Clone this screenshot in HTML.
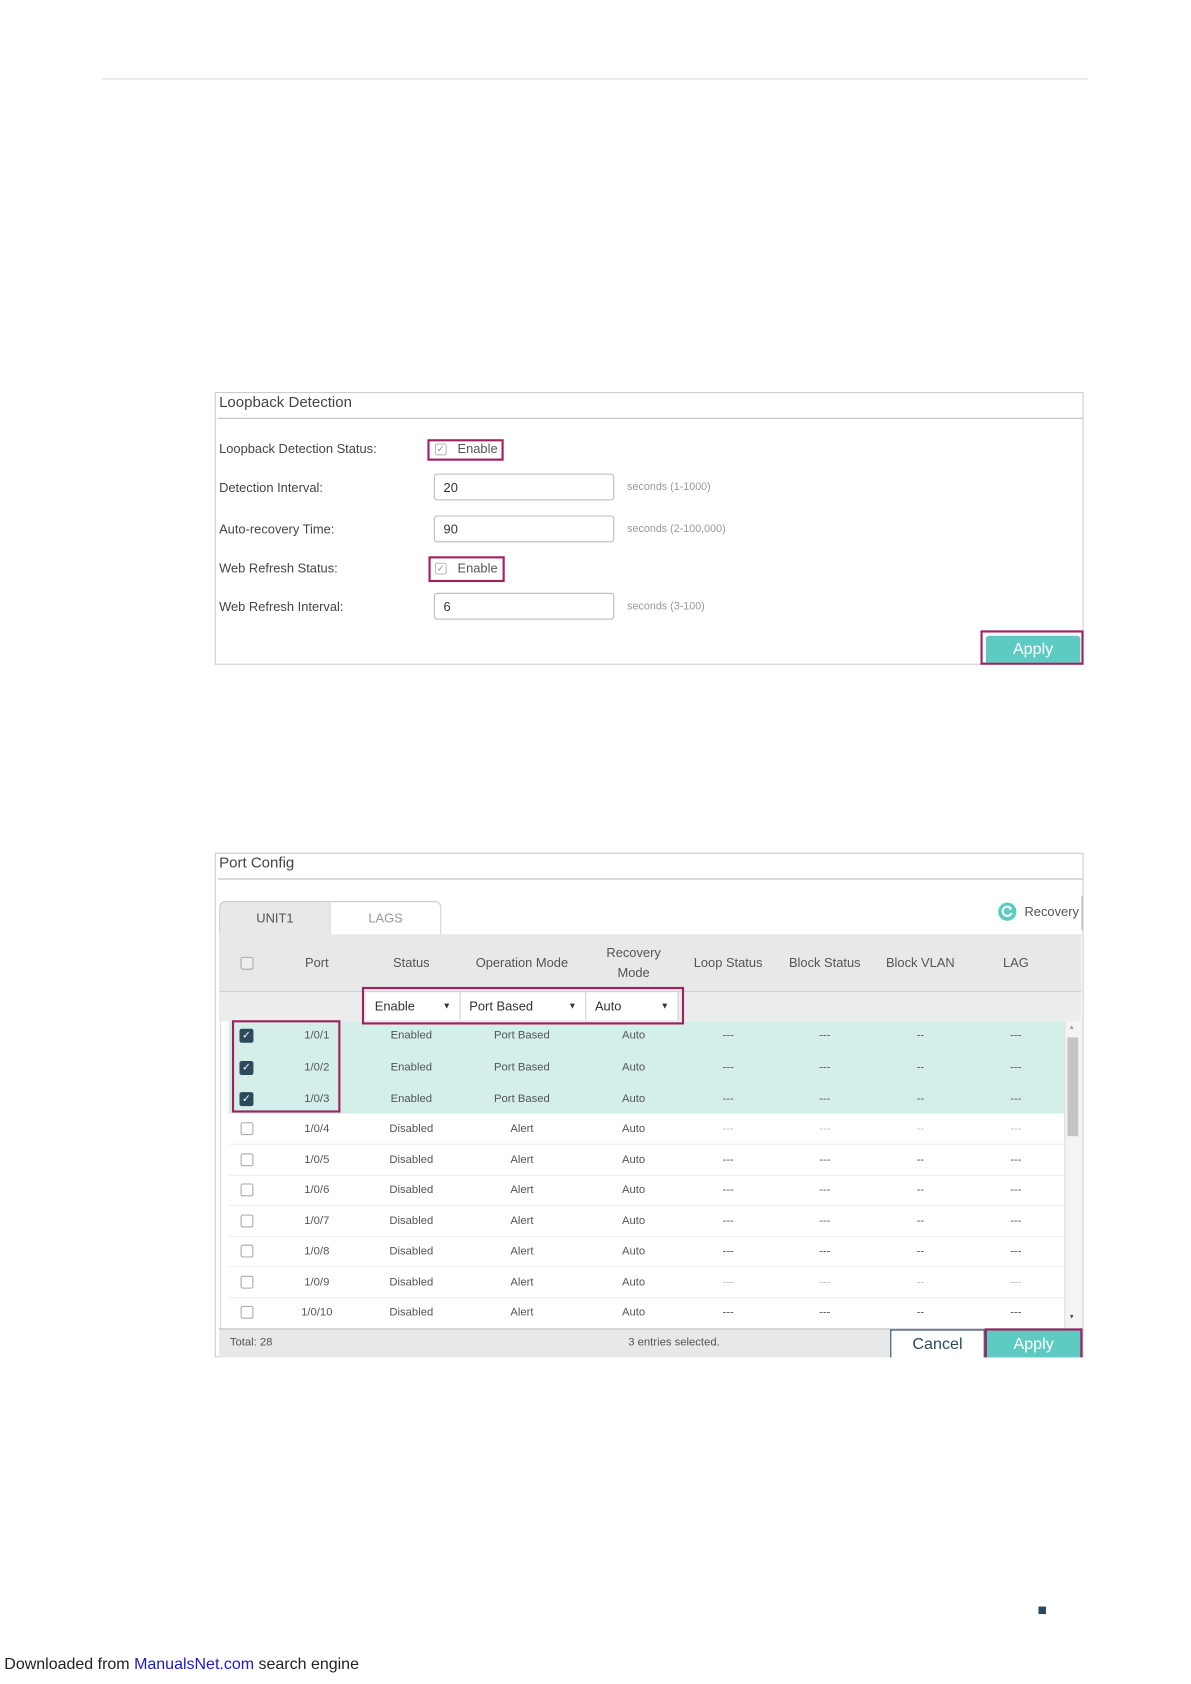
<!DOCTYPE html>
<html><head><meta charset="utf-8"><style>
html,body{margin:0;padding:0;background:#fff;width:1191px;height:1684px;overflow:hidden}
#w{position:absolute;left:0;top:0;width:1109px;height:1568px;transform:scale(1.0739);transform-origin:0 0;font-family:"Liberation Sans",sans-serif;color:#444}
.a{position:absolute;white-space:nowrap}
.lbl{font-size:12px;color:#444;transform:translateY(-50%)}
.hint{font-size:10px;color:#999;transform:translateY(-50%)}
.inp{position:absolute;left:404px;width:168px;height:25px;border:1px solid #bbb;border-radius:3px;box-sizing:border-box;font-size:12px;line-height:24px;padding-left:8px;color:#333}
.mag{position:absolute;border:2px solid #a3205f;box-sizing:border-box}
.cb{position:absolute;width:11px;height:11px;border:1px solid #aaa;border-radius:2px;box-sizing:border-box;background:#fff}
.ck{position:absolute;width:13px;height:13px;border-radius:2px;background:#2c4a5e}
.c{position:absolute;transform:translate(-50%,-50%);font-size:10.5px;color:#555;white-space:nowrap}
.h{position:absolute;transform:translate(-50%,-50%);font-size:12px;color:#555;white-space:nowrap;text-align:center;line-height:19px}
.sel{position:absolute;top:924px;height:26px;background:#fff;border-right:1px solid #ccc;box-sizing:border-box;font-size:12px;line-height:26px;padding-left:8px;color:#333}
.sel i{position:absolute;right:8px;top:0;font-style:normal;font-size:8px}
</style></head><body><div id="w">
<div class="a" style="left:95px;top:73px;width:918px;height:1px;background:#ddd"></div>

<div class="a" style="left:200px;top:365px;width:809px;height:254px;border:1px solid #ccc;box-sizing:border-box"></div>
<div class="a" style="left:204px;top:366px;font-size:14px;color:#444">Loopback Detection</div>
<div class="a" style="left:203px;top:389px;width:805px;height:1px;background:#bbb"></div>
<div class="a lbl" style="left:204px;top:418px">Loopback Detection Status:</div>
<div class="a lbl" style="left:204px;top:454px">Detection Interval:</div>
<div class="a lbl" style="left:204px;top:493px">Auto-recovery Time:</div>
<div class="a lbl" style="left:204px;top:529px">Web Refresh Status:</div>
<div class="a lbl" style="left:204px;top:565px">Web Refresh Interval:</div>
<div class="mag" style="left:398px;top:409px;width:71px;height:20px"></div>
<div class="cb" style="left:405px;top:413px;border-color:#bbb;font-size:9px;line-height:9px;text-align:center;color:#888">✓</div>
<div class="a" style="left:426px;top:411px;font-size:12px;color:#555">Enable</div>
<div class="mag" style="left:399px;top:518px;width:71px;height:24px"></div>
<div class="cb" style="left:405px;top:524px;border-color:#bbb;font-size:9px;line-height:9px;text-align:center;color:#888">✓</div>
<div class="a" style="left:426px;top:522px;font-size:12px;color:#555">Enable</div>
<div class="inp" style="top:441px">20</div>
<div class="inp" style="top:480px">90</div>
<div class="inp" style="top:552px">6</div>
<div class="a hint" style="left:584px;top:454px">seconds (1-1000)</div>
<div class="a hint" style="left:584px;top:493px">seconds (2-100,000)</div>
<div class="a hint" style="left:584px;top:565px">seconds (3-100)</div>
<div class="mag" style="left:913px;top:587px;width:96px;height:32px"></div>
<div class="a" style="left:918px;top:592px;width:88px;height:25px;background:#5ecbc3;border-radius:3px 3px 0 0;color:#fff;font-size:15px;text-align:center;line-height:26px">Apply</div>

<div class="a" style="left:200px;top:794px;width:809px;height:470px;border:1px solid #ccc;box-sizing:border-box"></div>
<div class="a" style="left:204px;top:795px;font-size:14px;color:#444">Port Config</div>
<div class="a" style="left:203px;top:818px;width:805px;height:1px;background:#bbb"></div>
<div class="a" style="left:204px;top:839px;width:104px;height:32px;background:#e6e9e8;border:1px solid #ccc;border-bottom:none;border-radius:6px 0 0 0;box-sizing:border-box;text-align:center;line-height:31px;font-size:12px;color:#555">UNIT1</div>
<div class="a" style="left:308px;top:839px;width:103px;height:32px;background:#fff;border:1px solid #ccc;border-left:none;border-bottom:none;border-radius:0 6px 0 0;box-sizing:border-box;text-align:center;line-height:31px;font-size:12px;color:#999">LAGS</div>
<svg class="a" style="left:929px;top:840px" width="18" height="18" viewBox="0 0 18 18"><circle cx="9" cy="9" r="8.5" fill="#5ecbc3"/><path d="M12.5 6.2A4.3 4.3 0 1 0 13 10" fill="none" stroke="#fff" stroke-width="1.8"/><path d="M11 4.5L13.5 6.5L10.5 7.5Z" fill="#fff"/></svg>
<div class="a" style="left:954px;top:842px;font-size:12px;color:#555">Recovery</div>
<div class="a" style="left:1007px;top:834px;width:1px;height:32px;background:#bbb"></div>
<div class="a" style="left:204px;top:870px;width:803px;height:54px;background:#e6e9e8;border-bottom:1px solid #ccc;box-sizing:border-box"></div>
<div class="cb" style="left:224px;top:891px;width:12px;height:12px;background:#eee"></div>
<div class="h" style="left:295px;top:897px">Port</div>
<div class="h" style="left:383px;top:897px">Status</div>
<div class="h" style="left:486px;top:897px">Operation Mode</div>
<div class="h" style="left:590px;top:897px">Recovery<br>Mode</div>
<div class="h" style="left:678px;top:897px">Loop Status</div>
<div class="h" style="left:768px;top:897px">Block Status</div>
<div class="h" style="left:857px;top:897px">Block VLAN</div>
<div class="h" style="left:946px;top:897px">LAG</div>
<div class="a" style="left:204px;top:924px;width:803px;height:27px;background:#eceeee"></div>
<div class="sel" style="left:341px;width:88px">Enable<i>▼</i></div>
<div class="sel" style="left:429px;width:117px">Port Based<i>▼</i></div>
<div class="sel" style="left:546px;width:86px">Auto<i>▼</i></div>
<div class="a" style="left:213px;top:951px;width:778px;height:86px;background:#d4efe9"></div>
<div id="rows"></div>
<div class="a" style="left:991px;top:951px;width:16px;height:286px;background:#f4f4f4;border-left:1px solid #ddd"></div>
<div class="a" style="left:994px;top:966px;width:10px;height:92px;background:#c4c4c4"></div>
<div class="a" style="left:995px;top:954px;font-size:6px;color:#999">▲</div>
<div class="a" style="left:995px;top:1224px;font-size:6px;color:#555">▼</div>
<div class="a" style="left:205px;top:951px;width:1px;height:286px;background:#ddd"></div>
<div class="mag" style="left:337px;top:919px;width:300px;height:35px"></div>
<div class="mag" style="left:216px;top:950px;width:101px;height:86px"></div>
<div class="a" style="left:204px;top:1237px;width:803px;height:27px;background:#e6e9e8;border-top:1px solid #bbb;box-sizing:border-box"></div>
<div class="a" style="left:214px;top:1244px;font-size:10.5px;color:#555">Total: 28</div>
<div class="a" style="left:585px;top:1244px;font-size:10.5px;color:#555">3 entries selected.</div>
<div class="a" style="left:829px;top:1238px;width:88px;height:26px;background:#fff;border:1px solid #2c4a5e;border-bottom:none;box-sizing:border-box;text-align:center;line-height:25px;font-size:15px;color:#2c4a5e">Cancel</div>
<div class="a" style="left:917px;top:1237px;width:91px;height:27px;background:#5ecbc3;border:2px solid #a3205f;border-bottom:none;box-sizing:border-box;text-align:center;line-height:25px;font-size:15px;color:#fff">Apply</div>

<div class="a" style="left:967px;top:1496px;width:7px;height:7px;background:#2c4a5e"></div>
<div class="a" style="left:4px;top:1542px;font-size:14.9px;color:#222">Downloaded from <span style="color:#1a1acc">ManualsNet.com</span> search engine</div>
</div>
<script>
var ys=[964,994,1023,1051,1080,1108,1137,1165,1194,1222],h='';
for(var i=0;i<10;i++){var y=ys[i],on=i<3,light=(i==3||i==8);
h+=on?'<div class="ck" style="left:223px;top:'+(y-6)+'px;color:#fff;font-size:10px;line-height:13px;text-align:center">✓</div>':'<div class="cb" style="left:224px;top:'+(y-6)+'px;width:12px;height:12px"></div>';
var d=[['1/0/'+(i+1),295],[on?'Enabled':'Disabled',383],[on?'Port Based':'Alert',486],['Auto',590]];
d.forEach(function(c){h+='<div class="c" style="left:'+c[1]+'px;top:'+y+'px">'+c[0]+'</div>'});
var dc=light?'#bbb':'#555';
[['---',678],['---',768],['--',857],['---',946]].forEach(function(c){h+='<div class="c" style="left:'+c[1]+'px;top:'+y+'px;color:'+dc+'">'+c[0]+'</div>'});
if(i>2&&i<9)h+='<div class="a" style="left:213px;top:'+(y+14)+'px;width:778px;height:1px;background:#eee"></div>';}
document.getElementById('rows').outerHTML=h;
</script>
</body></html>
